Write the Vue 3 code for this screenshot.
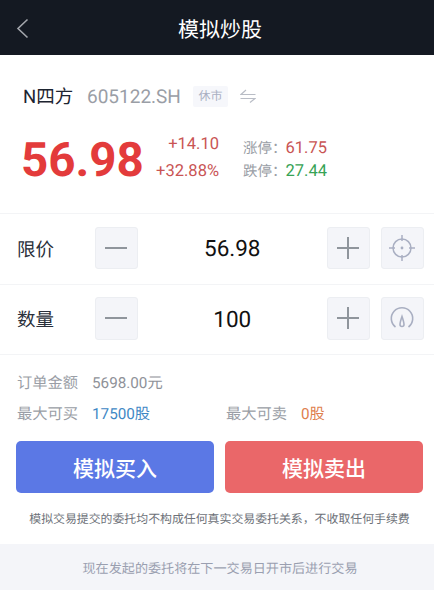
<script setup>
import { ref } from 'vue';

const stock = ref({ name: 'N四方', code: '605122.SH', status: '休市' });
const rows = [
  { label: '限价', value: '56.98', icon: 'target' },
  { label: '数量', value: '100', icon: 'gauge' }
];
</script>

<template>
  <div class="page">
    <header class="nav">
      <svg class="back" width="13" height="21" viewBox="0 0 13 21">
        <path d="M11.5 1.5 L2 10.5 L11.5 19.5" fill="none" stroke="#a3a6ac" stroke-width="1.6" />
      </svg>
      <span class="title">模拟炒股</span>
    </header>

    <section class="quote">
      <div class="stock">
        <span class="name">{{ stock.name }}</span>
        <span class="code">{{ stock.code }}</span>
        <span class="tag">{{ stock.status }}</span>
        <svg class="swap" width="16" height="14" viewBox="0 0 16 14">
          <path d="M15.5 5.5 H1 L6 1 M0.5 9.5 H15 L10 13.5" fill="none" stroke="#b9bdc6" stroke-width="1.2" />
        </svg>
      </div>
      <div class="prices">
        <div class="last">56.98</div>
        <div class="change">
          <div>+14.10</div>
          <div>+32.88%</div>
        </div>
        <div class="limits">
          <div><span class="limit-label">涨停：</span><span class="up">61.75</span></div>
          <div><span class="limit-label">跌停：</span><span class="down">27.44</span></div>
        </div>
      </div>
    </section>

    <section v-for="row in rows" :key="row.label" class="row">
      <span class="row-label">{{ row.label }}</span>
      <button class="btn">
        <svg width="24" height="24" viewBox="0 0 24 24"><path d="M1 12 H23" stroke="#8f959c" stroke-width="2" /></svg>
      </button>
      <span class="row-value">{{ row.value }}</span>
      <button class="btn">
        <svg width="24" height="24" viewBox="0 0 24 24"><path d="M1 12 H23 M12 1 V23" stroke="#8f959c" stroke-width="2" /></svg>
      </button>
      <button class="btn btn-last">
        <svg v-if="row.icon === 'target'" width="26" height="26" viewBox="0 0 26 26" fill="none" stroke="#a9afc2" stroke-width="1.5">
          <circle cx="13" cy="13" r="9" />
          <path d="M13 0 V6 M13 20 V26 M0 13 H6 M20 13 H26" />
          <circle cx="13" cy="13" r="1.4" fill="#a9afc2" stroke="none" />
        </svg>
        <svg v-else width="24" height="24" viewBox="0 0 24 24" fill="none" stroke="#a9afc2" stroke-width="1.6">
          <path d="M5.5 21 A10.7 10.7 0 1 1 18.5 21" />
          <path d="M12 10.5 C10.8 14 10 16.5 10 18.5 A2 2 0 0 0 14 18.5 C14 16.5 13.2 14 12 10.5 Z" />
        </svg>
      </button>
    </section>

    <section class="info">
      <div class="info-line">
        <span class="info-label">订单金额</span><span class="info-amount">5698.00元</span>
      </div>
      <div class="info-line">
        <div class="info-cell">
          <span class="info-label">最大可买</span><span class="blue">17500股</span>
        </div>
        <div class="info-cell">
          <span class="info-label">最大可卖</span><span class="orange">0股</span>
        </div>
      </div>
    </section>

    <section class="actions">
      <button class="action buy">模拟买入</button>
      <button class="action sell">模拟卖出</button>
    </section>

    <p class="note">模拟交易提交的委托均不构成任何真实交易委托关系，不收取任何手续费</p>

    <footer class="foot">现在发起的委托将在下一交易日开市后进行交易</footer>
  </div>
</template>

<style>
body { margin: 0; background: #fff; }
</style>

<style scoped>
.page {
  width: 434px;
  height: 590px;
  display: flex;
  flex-direction: column;
  background: #fff;
  overflow: hidden;
  font-family: Roboto, "Noto Sans CJK SC", sans-serif;
  text-rendering: geometricPrecision;
}

/* 顶部导航 */
.nav {
  height: 55px;
  flex: none;
  background: #141922;
  display: flex;
  align-items: center;
  justify-content: center;
  position: relative;
}
.back { position: absolute; left: 16px; top: 18px; }
.title { color: #fff; font-size: 21px; margin-left: 6px; padding-top: 2px; }

/* 行情 */
.quote {
  height: 158px;
  flex: none;
  box-sizing: border-box;
  padding: 27px 0 0 23px;
}
.stock { display: flex; align-items: center; height: 28px; }
.name { font-size: 18.5px; color: #1d2430; width: 64px; }
.code { font-size: 19px; color: #9a9ea6; width: 106px; }
.tag {
  width: 35px;
  height: 21px;
  background: #f6f7fb;
  color: #a9afc2;
  font-size: 12px;
  line-height: 21px;
  text-align: center;
  border-radius: 2px;
}
.swap { margin-left: 12px; }

.prices { display: flex; margin-top: 21px; }
.last {
  font-size: 47.5px;
  font-weight: 700;
  color: #e33b3b;
  line-height: 58px;
  margin-left: -2px;
  width: 128px;
}
.change {
  width: 70px;
  text-align: right;
  color: #c95454;
  font-size: 16.5px;
  line-height: 27px;
}
.limits {
  margin-left: 24px;
  font-size: 16.5px;
  line-height: 23px;
  padding-top: 6px;
}
.limit-label { color: #9a9ea6; font-size: 14.5px; margin-right: -1px; }
.up { color: #c95454; }
.down { color: #37a355; }

/* 价格、数量 */
.row {
  height: 70.5px;
  flex: none;
  box-sizing: border-box;
  border-top: 1px solid #f3f4f6;
  padding: 0 10.5px 2px 17px;
  display: flex;
  align-items: center;
}
.row-label { width: 78px; padding-top: 2px; font-size: 18.5px; color: #2a303a; }
.row-value {
  flex: 1;
  padding-top: 3px;
  text-align: center;
  font-size: 22.5px;
  color: #111;
}
.btn {
  width: 42.5px;
  height: 42.5px;
  padding: 0;
  background: #f4f5f9;
  border: 1px solid #eceef2;
  border-radius: 3px;
  display: flex;
  align-items: center;
  justify-content: center;
}
.btn-last { margin-left: 11.5px; }

/* 订单信息 */
.info {
  flex: none;
  border-top: 1px solid #f3f4f6;
  padding: 16px 11px 0 17px;
  font-size: 15.25px;
}
.info-line { display: flex; height: 31px; line-height: 24px; }
.info-cell { width: 209px; flex: none; }
.info-label { color: #9a9ea6; margin-right: 14px; }
.info-amount { color: #8f9299; }
.blue { color: #3f88c5; }
.orange { color: #de7f4e; }

/* 买卖按钮 */
.actions {
  flex: none;
  display: flex;
  gap: 11px;
  padding: 0 11px 0 16px;
  margin-top: 8px;
}
.action {
  flex: 1;
  height: 52px;
  border: none;
  border-radius: 5px;
  color: #fff;
  font-family: inherit;
  font-size: 21px;
  font-weight: 500;
  padding: 0;
}
.buy { background: #5b78e5; }
.sell { background: #ea6769; }

.note {
  flex: none;
  margin: 18px 0 0;
  padding-left: 5px;
  text-align: center;
  font-size: 11.9px;
  line-height: 16px;
  color: #6d7178;
}

.foot {
  flex: 1;
  margin-top: 17px;
  padding-left: 6px;
  background: #f4f5f9;
  color: #9a9fb0;
  font-size: 13.1px;
  display: flex;
  align-items: center;
  justify-content: center;
}
</style>
